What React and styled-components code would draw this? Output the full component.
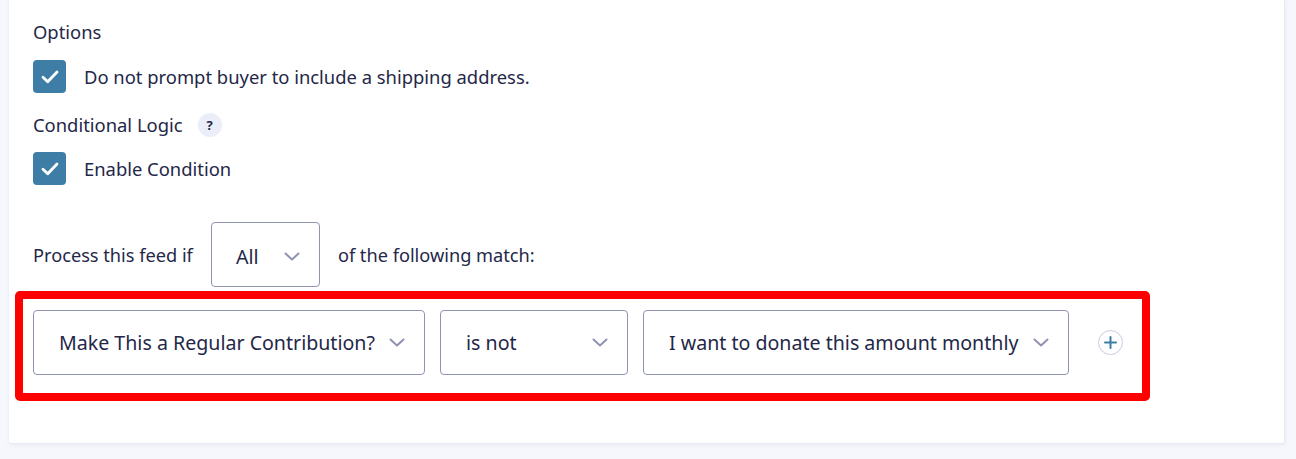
import styled, { createGlobalStyle } from "styled-components";

const GlobalStyle = createGlobalStyle`
  body {
    margin: 0;
    background: #f5f7fc;
    font-family: "Noto Sans", "Open Sans", sans-serif;
    color: #242748;
  }
`;

const Page = styled.div`
  padding: 0 11px 15px 9px;
`;

const Card = styled.div`
  background: #fff;
  border: 1px solid #e8eaf3;
  border-top: none;
  border-left: none;
  border-radius: 0 0 3px 3px;
  box-shadow: 0 1px 4px rgba(18, 25, 97, 0.06);
  height: 444px;
  box-sizing: border-box;
  padding: 19px 0 0 24px;
`;

const Label = styled.div`
  display: flex;
  align-items: center;
  gap: 15px;
  font-size: 18.4px;
  line-height: 26px;
  margin-bottom: ${(p) => p.$mb || 0}px;
`;

const Help = styled.span`
  width: 24px;
  height: 24px;
  border-radius: 50%;
  background: #ebedf8;
  display: inline-flex;
  align-items: center;
  justify-content: center;
  font-size: 13px;
  font-weight: 700;
  color: #242748;
`;

const CheckRow = styled.label`
  display: flex;
  align-items: center;
  gap: 18px;
  font-size: 18.4px;
  margin-bottom: ${(p) => p.$mb || 0}px;
`;

const Box = styled.span`
  width: 33px;
  height: 33px;
  border-radius: 4px;
  background: #3e7da6;
  display: inline-flex;
  align-items: center;
  justify-content: center;
  flex-shrink: 0;
`;

const MatchRow = styled.div`
  display: flex;
  align-items: center;
  gap: 18px;
  font-size: 18.2px;
  margin-top: 37px;
`;

const Select = styled.div`
  box-sizing: border-box;
  height: 65px;
  width: ${(p) => p.$w}px;
  border: 1px solid #9092b2;
  border-radius: 4px;
  background: #fff;
  display: flex;
  align-items: center;
  justify-content: space-between;
  padding: ${(p) => (p.$small ? "4px 19px 0 24px" : "0 19px 0 25px")};
  font-size: 19.6px;
  color: #242748;
  white-space: nowrap;
`;

const Highlight = styled.div`
  margin: 4px 0 0 -18px;
  width: 1135px;
  height: 110px;
  box-sizing: border-box;
  border: 8px solid #ff0000;
  border-radius: 5px;
  padding: 11px 0 0 10px;
`;

const Conditions = styled.div`
  display: flex;
  align-items: center;
  gap: 15px;
`;

const AddButton = styled.button`
  width: 25px;
  height: 25px;
  border-radius: 50%;
  border: 1px solid #c9ccdf;
  background: #fff;
  padding: 0;
  margin-left: 14px;
  display: inline-flex;
  align-items: center;
  justify-content: center;
`;

function Check() {
  return (
    <svg width="18" height="14" viewBox="0 0 18 14" fill="none">
      <path d="M2 7.3l4.7 4.5L16 2" stroke="#fff" strokeWidth="2.8" strokeLinecap="round" strokeLinejoin="round" />
    </svg>
  );
}

function Chevron() {
  return (
    <svg width="16" height="9" viewBox="0 0 16 9" fill="none">
      <path d="M1.5 1.5L8 7.5l6.5-6" stroke="#9092b2" strokeWidth="2" strokeLinecap="round" strokeLinejoin="round" />
    </svg>
  );
}

function Plus() {
  return (
    <svg width="13" height="13" viewBox="0 0 13 13" fill="none">
      <path d="M6.5 1v11M1 6.5h11" stroke="#3e7da6" strokeWidth="2" strokeLinecap="round" />
    </svg>
  );
}

export default function App() {
  return (
    <Page>
      <GlobalStyle />
      <Card>
        <Label $mb={15}>Options</Label>
        <CheckRow $mb={19}>
          <Box>
            <Check />
          </Box>
          Do not prompt buyer to include a shipping address.
        </CheckRow>
        <Label $mb={14}>
          Conditional Logic <Help>?</Help>
        </Label>
        <CheckRow>
          <Box>
            <Check />
          </Box>
          Enable Condition
        </CheckRow>
        <MatchRow>
          Process this feed if
          <Select $w={109} $small>
            All <Chevron />
          </Select>
          of the following match:
        </MatchRow>
        <Highlight>
          <Conditions>
            <Select $w={392}>
              Make This a Regular Contribution? <Chevron />
            </Select>
            <Select $w={188}>
              is not <Chevron />
            </Select>
            <Select $w={426}>
              I want to donate this amount monthly <Chevron />
            </Select>
            <AddButton>
              <Plus />
            </AddButton>
          </Conditions>
        </Highlight>
      </Card>
    </Page>
  );
}
